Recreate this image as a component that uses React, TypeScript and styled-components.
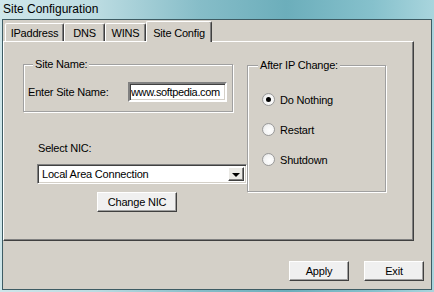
import styled, { createGlobalStyle } from "styled-components";

const GlobalStyle = createGlobalStyle`
  html, body {
    margin: 0;
    padding: 0;
  }
  body {
    width: 434px;
    height: 292px;
    overflow: hidden;
    font-family: "Liberation Sans", Arial, sans-serif;
    font-size: 11px;
    letter-spacing: -0.2px;
    color: #000;
  }
`;

const Window = styled.div`
  width: 434px;
  height: 292px;
  box-sizing: border-box;
  display: flex;
  flex-direction: column;
  padding: 0 2px 2px 2px;
  background: linear-gradient(
    90deg,
    #cfe6ea 0%,
    #bcdce2 22%,
    #86bdc8 46%,
    #6caebb 66%,
    #86c1cc 86%,
    #a9d5dd 100%
  );
`;

const TitleBar = styled.div`
  height: 19px;
  line-height: 19px;
  padding-left: 1px;
  font-size: 12px;
  letter-spacing: 0;
  color: #000;
`;

const Client = styled.div`
  flex: 1;
  display: flex;
  flex-direction: column;
  background: #d4d0c8;
  border: 1px solid #3e5c64;
`;

const TabStrip = styled.div`
  display: flex;
  align-items: flex-end;
  height: 21px;
  padding-left: 2px;
`;

const Tab = styled.div<{ $w: number; $active?: boolean }>`
  box-sizing: border-box;
  width: ${(p) => p.$w}px;
  height: ${(p) => (p.$active ? 21 : 18)}px;
  margin-bottom: ${(p) => (p.$active ? -1 : 0)}px;
  position: relative;
  z-index: ${(p) => (p.$active ? 1 : 0)};
  display: flex;
  align-items: center;
  justify-content: center;
  padding-top: 1px;
  background: #d4d0c8;
  border-top: 1px solid #fff;
  border-left: 1px solid #fff;
  border-right: 1px solid #404040;
  box-shadow: inset -1px 0 0 #808080;
  border-radius: 2px 2px 0 0;
  white-space: nowrap;
`;

const Panel = styled.div`
  box-sizing: border-box;
  width: 411px;
  height: 200px;
  display: grid;
  grid-template-columns: 224px 139px;
  align-items: start;
  padding: 16px 0 0 19px;
  border-top: 1px solid #fff;
  border-left: 1px solid #fff;
  border-right: 1px solid #404040;
  border-bottom: 1px solid #404040;
  box-shadow: inset -1px -1px 0 #808080;
`;

const LeftColumn = styled.div`
  display: flex;
  flex-direction: column;
  align-items: flex-start;
`;

const GroupBox = styled.fieldset<{ $w: number; $top?: number }>`
  box-sizing: border-box;
  width: ${(p) => p.$w}px;
  margin: ${(p) => p.$top ?? 0}px 0 0 0;
  padding: 0;
  min-width: 0;
  border: 1px solid #a0a0a0;
  box-shadow: inset 1px 1px 0 #fff, 1px 1px 0 #fff;
`;

const Legend = styled.legend<{ $indent: number }>`
  margin-left: ${(p) => p.$indent}px;
  padding: 0 2px;
  line-height: 13px;
  background: #d4d0c8;
`;

const SiteRow = styled.div`
  display: flex;
  align-items: center;
  justify-content: space-between;
  padding: 11px 5px 9px 4px;
`;

const TextInput = styled.input`
  box-sizing: border-box;
  width: 99px;
  height: 20px;
  margin: 0;
  padding: 0 0 0 1px;
  font-family: "Liberation Sans", Arial, sans-serif;
  font-size: 11px;
  letter-spacing: -0.35px;
  color: #000;
  background: #fff;
  border-style: solid;
  border-width: 2px;
  border-color: #808080 #fff #fff #808080;
  box-shadow: inset 1px 1px 0 #404040, inset -1px -1px 0 #d4d0c8;
  outline: none;
`;

const FieldLabel = styled.div<{ $left: number; $top: number }>`
  margin: ${(p) => p.$top}px 0 0 ${(p) => p.$left}px;
  line-height: 13px;
`;

const Combo = styled.div`
  box-sizing: border-box;
  width: 210px;
  height: 20px;
  margin: 9px 0 0 14px;
  display: flex;
  align-items: stretch;
  background: #fff;
  border-style: solid;
  border-width: 1px;
  border-color: #808080 #fff #fff #808080;
  box-shadow: inset 1px 1px 0 #404040, inset -1px -1px 0 #d4d0c8;
  padding: 2px;
`;

const ComboText = styled.div`
  flex: 1;
  display: flex;
  align-items: center;
  padding-left: 2px;
`;

const ComboButton = styled.div`
  box-sizing: border-box;
  width: 16px;
  display: flex;
  align-items: center;
  justify-content: center;
  background: #ebeae6;
  border-top: 1px solid #fff;
  border-left: 1px solid #fff;
  border-right: 1px solid #404040;
  border-bottom: 1px solid #404040;
  box-shadow: inset -1px -1px 0 #808080;
`;

const Arrow = styled.span`
  width: 0;
  height: 0;
  border-left: 4px solid transparent;
  border-right: 4px solid transparent;
  border-top: 4px solid #000;
  margin-top: 1px;
`;

const Button = styled.button<{ $w: number; $left?: number }>`
  box-sizing: border-box;
  width: ${(p) => p.$w}px;
  height: 20px;
  margin: 0 0 0 ${(p) => p.$left ?? 0}px;
  padding: 0;
  font-family: "Liberation Sans", Arial, sans-serif;
  font-size: 11px;
  letter-spacing: -0.2px;
  color: #000;
  background: #f0f0f0;
  border-top: 1px solid #fff;
  border-left: 1px solid #fff;
  border-right: 1px solid #404040;
  border-bottom: 1px solid #404040;
  box-shadow: inset -1px -1px 0 #a0a0a0;
  cursor: default;
`;

const NicButton = styled(Button)`
  margin-top: 8px;
`;

const RadioList = styled.div`
  display: flex;
  flex-direction: column;
  gap: 17px;
  padding: 21px 0 25px 14px;
`;

const RadioRow = styled.label`
  display: flex;
  align-items: center;
  gap: 5px;
  height: 13px;
`;

const RadioCircle = styled.span<{ $on?: boolean }>`
  box-sizing: border-box;
  width: 13px;
  height: 13px;
  border-radius: 50%;
  border: 1px solid #9a9a9a;
  background: radial-gradient(circle at 60% 60%, #ffffff 0%, #f4f4f4 55%, #d6d6d6 100%);
  display: flex;
  align-items: center;
  justify-content: center;
  &::after {
    content: "";
    display: ${(p) => (p.$on ? "block" : "none")};
    width: 5px;
    height: 5px;
    border-radius: 50%;
    background: #000;
  }
`;

const Footer = styled.div`
  display: flex;
  justify-content: flex-end;
  gap: 15px;
  padding: 20px 7px 0 0;
`;

const tabs = [
  { label: "IPaddress", w: 59 },
  { label: "DNS", w: 41 },
  { label: "WINS", w: 41 },
  { label: "Site Config", w: 66, active: true },
];

const options = [
  { label: "Do Nothing", on: true },
  { label: "Restart" },
  { label: "Shutdown" },
];

export default function App() {
  return (
    <>
      <GlobalStyle />
      <Window>
        <TitleBar>Site Configuration</TitleBar>
        <Client>
          <TabStrip>
            {tabs.map((t) => (
              <Tab key={t.label} $w={t.w} $active={t.active}>
                {t.label}
              </Tab>
            ))}
          </TabStrip>
          <Panel>
            <LeftColumn>
              <GroupBox $w={210}>
                <Legend $indent={9}>Site Name:</Legend>
                <SiteRow>
                  <span>Enter Site Name:</span>
                  <TextInput defaultValue="www.softpedia.com" />
                </SiteRow>
              </GroupBox>
              <FieldLabel $left={15} $top={30}>
                Select NIC:
              </FieldLabel>
              <Combo>
                <ComboText>Local Area Connection</ComboText>
                <ComboButton>
                  <Arrow />
                </ComboButton>
              </Combo>
              <NicButton $w={80} $left={74}>
                Change NIC
              </NicButton>
            </LeftColumn>
            <GroupBox $w={139} $top={1}>
              <Legend $indent={10}>After IP Change:</Legend>
              <RadioList>
                {options.map((o) => (
                  <RadioRow key={o.label}>
                    <RadioCircle $on={o.on} />
                    {o.label}
                  </RadioRow>
                ))}
              </RadioList>
            </GroupBox>
          </Panel>
          <Footer>
            <Button $w={60}>Apply</Button>
            <Button $w={60}>Exit</Button>
          </Footer>
        </Client>
      </Window>
    </>
  );
}
